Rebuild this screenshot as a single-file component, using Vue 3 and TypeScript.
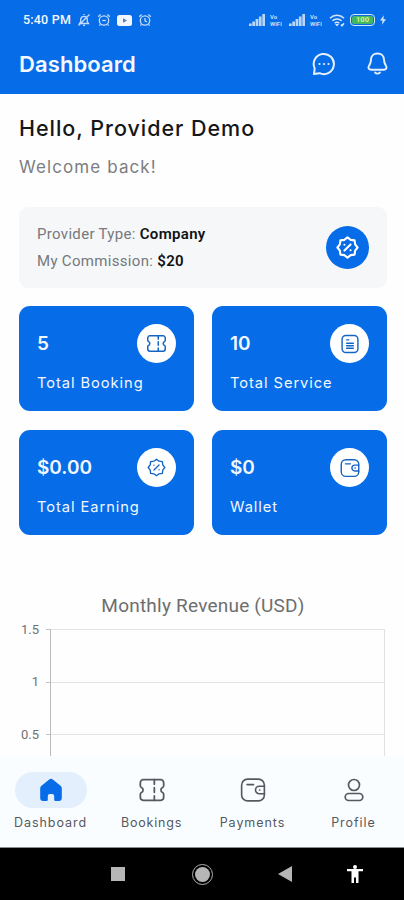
<script setup lang="ts">
interface Stat {
  value: string
  label: string
  icon: string
  cls: string
}

interface Tab {
  label: string
  icon: string
  active: boolean
  cls: string
}

const stats: Stat[] = [
  { value: '5', label: 'Total Booking', icon: 'ticket', cls: 'booking' },
  { value: '10', label: 'Total Service', icon: 'document', cls: 'service' },
  { value: '$0.00', label: 'Total Earning', icon: 'discount', cls: 'earning' },
  { value: '$0', label: 'Wallet', icon: 'wallet', cls: 'balance' },
]

const tabs: Tab[] = [
  { label: 'Dashboard', icon: 'home', active: true, cls: 't-dash' },
  { label: 'Bookings', icon: 'ticket', active: false, cls: 't-book' },
  { label: 'Payments', icon: 'wallet', active: false, cls: 't-pay' },
  { label: 'Profile', icon: 'profile', active: false, cls: 't-prof' },
]

const ticks: string[] = ['1.5', '1', '0.5']
const carriers: number[] = [1, 2]
</script>

<template>
  <div class="screen">
    <svg class="defs" width="0" height="0" aria-hidden="true">
      <symbol id="ticket" viewBox="0 0 24 24">
        <path d="M4.500 3.200h15A2.500 2.500 0 0 1 22 5.700v2.600a1.800 1.800 0 0 1-1 1.600a2.300 2.300 0 0 0 0 4.200a1.800 1.800 0 0 1 1 1.600v2.600a2.500 2.500 0 0 1-2.500 2.500h-15A2.500 2.500 0 0 1 2 18.300v-2.600a1.800 1.800 0 0 1 1-1.600a2.300 2.300 0 0 0 0-4.200a1.800 1.800 0 0 1-1-1.600V5.700a2.500 2.500 0 0 1 2.500-2.500z" />
        <path d="M14 3.200v3.800M14 10v4M14 17v3.800" />
      </symbol>
      <symbol id="document" viewBox="0 0 24 24">
        <rect x="2.500" y="1.800" width="19" height="20.400" rx="4.500" />
        <path d="M8 7h2.500M8 11h8M8 14h8M8 17h8" />
      </symbol>
      <symbol id="discount" viewBox="0 0 24 24">
        <path d="M12 1.500L15.300 4.050L19.400 4.600L19.950 8.700L22.500 12L19.950 15.300L19.400 19.400L15.300 19.950L12 22.500L8.700 19.950L4.600 19.400L4.050 15.300L1.500 12L4.050 8.700L4.600 4.600L8.700 4.050z" />
        <path d="M8.800 15.200l6.400-6.400M8.800 9.200h.010M15.200 14.800h.010" />
      </symbol>
      <symbol id="wallet" viewBox="0 0 24 24">
        <rect x="1.500" y="2" width="21" height="20" rx="5.500" />
        <path d="M22.500 8.500h-4.700a3.500 3.500 0 0 0 0 7h4.700M18 12h.300M6.500 7h6" />
      </symbol>
      <symbol id="home" viewBox="0 0 24 24">
        <path d="M10.200 1.500a2.900 2.900 0 0 1 3.600 0l8 6.500a2.800 2.800 0 0 1 1 2.200V20a3 3 0 0 1-3 3h-3.300a1.300 1.300 0 0 1-1.300-1.300V18a2 2 0 0 0-2-2h-2.400a2 2 0 0 0-2 2v3.700A1.300 1.300 0 0 1 7.500 23H4.200a3 3 0 0 1-3-3v-9.800a2.800 2.800 0 0 1 1-2.200z" />
      </symbol>
      <symbol id="profile" viewBox="0 0 24 24">
        <circle cx="12" cy="7" r="5.500" />
        <rect x="3.200" y="15.500" width="17.600" height="7" rx="3.500" />
      </symbol>
      <symbol id="clock" viewBox="0 0 14 14">
        <circle cx="7" cy="7.500" r="4.700" />
        <path d="M1.200 3.700L3.600 1.500M12.800 3.700L10.400 1.500M3.400 11.500l-1 1.200M10.600 11.500l1 1.200" />
      </symbol>
    </svg>

    <header class="top">
      <div class="status">
        <span class="time">5:40 PM</span>
        <svg class="st-icon" viewBox="0 0 14 14">
          <path d="M2.500 10.500h9l-1.200-2V6a3.400 3.400 0 0 0-6.600 0v2.500zM6 12.400h2M1.500 12.500L12.500 1.500M7 2V1" />
        </svg>
        <svg class="st-icon" viewBox="0 0 14 14"><use href="#clock" /><path d="M5.200 7.500h3.600" /></svg>
        <svg class="video" viewBox="0 0 15 11">
          <rect width="15" height="11" rx="2.500" fill="#f1f6ff" />
          <path d="M6 3.200v4.600l4-2.300z" fill="#4d7fb8" />
        </svg>
        <svg class="st-icon" viewBox="0 0 14 14"><use href="#clock" /><path d="M7 5v2.800l2 1" /></svg>
        <div class="right">
          <template v-for="n in carriers" :key="n">
            <svg class="bars" viewBox="0 0 16 12">
              <path d="M0 9.500h2.700V12H0zM3.300 7.500H6V12H3.300zM6.600 5h2.700v7H6.600zM9.900 2.500h2.700V12H9.900zM13.300 0H16v12h-2.700z" />
            </svg>
            <span class="vo"><span>Vo</span><span>WiFi</span></span>
          </template>
          <svg class="wifi" viewBox="0 0 16 13">
            <path d="M1 4.200a10 10 0 0 1 14 0M3.400 6.800a6.500 6.500 0 0 1 9.200 0M5.800 9.200a3 3 0 0 1 4.400 0" />
            <path class="solid" d="M6 10h4L8 12.500z" />
            <path d="M12 10.500l1 1.300 2-2.600" />
          </svg>
          <span class="battery"><span class="charge">100</span></span>
          <svg class="bolt" viewBox="0 0 7 11"><path d="M4.500 0L0 6h3L2.300 11 7 4.500H4z" /></svg>
        </div>
      </div>
      <div class="bar">
        <h1>Dashboard</h1>
        <svg class="chat" viewBox="0 0 24 24">
          <path d="M2 22l.700-5.600A10.100 10.100 0 1 1 7.600 21.200z" />
          <path d="M7.500 12h.010M12 12h.010M16.500 12h.010" class="dots" />
        </svg>
        <svg class="bell" viewBox="0 0 24 24">
          <path d="M12 1.500c-4 0-6.800 2.900-6.800 6.700 0 3.400-.700 4.300-2 6.100-1.500 2.200-.400 4.200 2.400 4.200h12.800c2.800 0 3.900-2 2.400-4.200-1.300-1.800-2-2.700-2-6.100 0-3.800-2.800-6.700-6.800-6.700z" />
          <path d="M9.500 21.400c1.300 1.500 3.700 1.500 5 0" />
        </svg>
      </div>
    </header>

    <main>
      <h2>Hello, Provider Demo</h2>
      <p class="welcome">Welcome back!</p>

      <section class="info">
        <div>
          <p>Provider Type: <b>Company</b></p>
          <p>My Commission: <b>$20</b></p>
        </div>
        <span class="disc"><svg class="icon"><use href="#discount" /></svg></span>
      </section>

      <section class="stats">
        <article v-for="s in stats" :key="s.label" :class="['stat', s.cls]">
          <div class="stat-top">
            <strong>{{ s.value }}</strong>
            <span class="disc"><svg class="icon"><use :href="'#' + s.icon" /></svg></span>
          </div>
          <span class="stat-label">{{ s.label }}</span>
        </article>
      </section>

      <h3>Monthly Revenue (USD)</h3>
      <section class="chart">
        <div class="axis"><span v-for="t in ticks" :key="t">{{ t }}</span></div>
        <div class="marks"><i v-for="t in ticks" :key="t"></i></div>
        <div class="plot"><i v-for="t in ticks" :key="t"></i></div>
      </section>
    </main>

    <nav class="tabs">
      <div v-for="t in tabs" :key="t.label" :class="['tab', t.cls, { active: t.active }]">
        <span class="pill"><svg class="icon"><use :href="'#' + t.icon" /></svg></span>
        <span class="tab-label">{{ t.label }}</span>
      </div>
    </nav>

    <footer class="system">
      <span class="square"></span>
      <span class="round"><i></i></span>
      <svg class="back" viewBox="0 0 14 16"><path d="M14 0v16L0 8z" /></svg>
      <svg class="access" viewBox="0 0 16 18">
        <circle cx="8" cy="2" r="2" />
        <path d="M0 4h16v2.200h-4.500V18H9v-5.500H7V18H4.500V6.200H0z" />
      </svg>
    </footer>
  </div>
</template>

<style>
body {
  margin: 0;
  background: #fff;
}
</style>

<style scoped>
.screen {
  width: 404px;
  height: 900px;
  overflow: hidden;
  display: flex;
  flex-direction: column;
  background: #fefefe;
  font-family: Inter, Roboto, sans-serif;
}
h1, h2, h3, p { margin: 0; }
svg { display: block; flex: none; }
.defs { position: absolute; }
.icon {
  fill: none;
  stroke: currentColor;
  stroke-width: 1.5;
  stroke-linecap: round;
  stroke-linejoin: round;
}
.top {
  height: 94px;
  flex: none;
  background: #066ce8;
  color: #f4f8ff;
}
.status {
  height: 40px;
  display: flex;
  align-items: center;
  padding: 0 17px 0 23px;
}
.time {
  width: 49px;
  font: 500 12.500px/16px Roboto, sans-serif;
  letter-spacing: 0.200px;
  white-space: nowrap;
  margin-right: 5px;
}
.st-icon {
  width: 14px;
  height: 14px;
  margin-right: 6px;
  fill: none;
  stroke: #c5dcfa;
  stroke-width: 1.300;
}
.video { width: 15px; height: 11px; margin-right: 6px; }
.right { display: flex; align-items: center; margin-left: auto; }
.bars { width: 16px; height: 12px; fill: #b9d5f8; margin-right: 5px; }
.vo {
  display: flex;
  flex-direction: column;
  width: 14px;
  margin-right: 5px;
  font: 700 6px/7px Roboto, sans-serif;
  color: #c5dcfa;
}
.wifi {
  width: 16px;
  height: 13px;
  fill: none;
  stroke: #d5e6fb;
  stroke-width: 1.500;
  margin-right: 5px;
}
.wifi .solid { fill: #d5e6fb; stroke: none; }
.battery {
  box-sizing: border-box;
  width: 25px;
  height: 12px;
  padding: 1px;
  border: 1px solid #d5e8f5;
  border-radius: 4px;
}
.charge {
  display: block;
  height: 8px;
  border-radius: 2px;
  background: #42b865;
  color: #d9f28a;
  text-align: center;
  font: 700 7.500px/8px Roboto, sans-serif;
}
.bolt { width: 6px; height: 10px; margin: 0 1px 0 5px; fill: #d5e6fb; }
.bar {
  height: 47px;
  display: flex;
  align-items: center;
  padding: 0 15px 0 19px;
}
h1 {
  margin-right: auto;
  font-size: 22px;
  line-height: 28px;
  font-weight: 600;
  letter-spacing: 0.100px;
}
.chat, .bell {
  fill: none;
  stroke: #e6f0ff;
  stroke-width: 2;
  stroke-linejoin: round;
  stroke-linecap: round;
}
.chat { width: 24px; height: 24px; margin-right: 30px; }
.bell { width: 23px; height: 23px; }
.chat .dots { stroke-width: 2.200; }

main {
  flex: 1;
  min-height: 0;
  overflow: hidden;
  padding: 0 17px 0 19px;
}
h2 {
  margin-top: 20px;
  font-size: 21.500px;
  line-height: 28px;
  font-weight: 500;
  letter-spacing: 0.970px;
  color: #161718;
  white-space: nowrap;
}
.welcome {
  margin-top: 14px;
  font-size: 17px;
  line-height: 22px;
  color: #7b7d80;
  letter-spacing: 1.100px;
}
.info {
  height: 81px;
  margin-top: 29px;
  box-sizing: border-box;
  display: flex;
  align-items: center;
  justify-content: space-between;
  padding: 0 18px;
  border-radius: 9px;
  background: #f5f7f9;
}
.info p {
  font: 400 15px/27px Roboto, sans-serif;
  letter-spacing: 0.320px;
  color: #77797c;
  white-space: nowrap;
}
.info b { font-weight: 600; color: #111214; }
.disc {
  display: grid;
  place-items: center;
  border-radius: 50%;
}
.info .disc { width: 43px; height: 43px; background: #066ce8; color: #fff; }
.info .icon { width: 23px; height: 23px; stroke-width: 2.200; }
.stats {
  display: grid;
  grid-template-columns: 175px 175px;
  grid-auto-rows: 105px;
  gap: 19px 18px;
  margin-top: 18px;
}
.stat {
  box-sizing: border-box;
  padding: 18px;
  border-radius: 11px;
  background: #066ce8;
  color: #f2f7ff;
}
.stat-top { display: flex; align-items: center; justify-content: space-between; }
.stat strong { font-size: 19px; line-height: 24px; font-weight: 600; }
.stat .disc { width: 39px; height: 39px; background: #fff; color: #1464c4; }
.stat .icon { width: 20px; height: 20px; stroke-width: 1.700; }
.stat.booking .icon { width: 21px; height: 21px; }
.stat.earning .icon { width: 19px; height: 19px; }
.stat-label {
  display: block;
  margin-top: 10px;
  font-size: 14.700px;
  line-height: 20px;
  letter-spacing: 0.930px;
  white-space: nowrap;
}
h3 {
  margin-top: 59px;
  font: 400 19px/24px Roboto, sans-serif;
  letter-spacing: 0.220px;
  color: #6d6e70;
  text-align: center;
  white-space: nowrap;
}
.chart { display: flex; margin-top: 11px; height: 140px; }
.axis {
  width: 20px;
  margin-right: 7px;
  display: flex;
  flex-direction: column;
  text-align: right;
  font: 400 13px/16px Roboto, sans-serif;
  color: #707173;
}
.axis span {
  flex: none;
  height: 52.500px;
  margin-top: -7.500px;
  margin-bottom: 7.500px;
}
.marks { width: 4px; }
.marks i, .plot i {
  display: block;
  box-sizing: border-box;
  height: 52.500px;
  border-top: 1px solid #e3e4e5;
}
.marks i { border-color: #c4c5c6; }
.plot {
  box-sizing: border-box;
  width: 335px;
  border-left: 1px solid #b9babb;
  border-right: 1px solid #e0e1e2;
}
.tabs {
  height: 92px;
  flex: none;
  box-sizing: border-box;
  display: grid;
  grid-template-columns: repeat(4, 101px);
  padding-top: 16px;
  background: #fafdff;
  border-bottom: 1px solid #8a8c8e;
}
.tab { display: flex; flex-direction: column; align-items: center; color: #55595e; }
.pill {
  display: grid;
  place-items: center;
  width: 72px;
  height: 36px;
  border-radius: 18px;
}
.active .pill { background: #e3effd; color: #066ce8; }
.tab .icon { width: 26px; height: 26px; stroke-width: 1.500; }
.tab.t-book .icon { width: 28px; height: 28px; }
.tab.active .icon { width: 24px; height: 24px; fill: currentColor; stroke: none; }
.tab.t-prof .icon { width: 24px; height: 24px; stroke-width: 1.700; }
.tab-label {
  margin-top: 7px;
  font-size: 12.500px;
  line-height: 16px;
  letter-spacing: 0.950px;
}
.t-book .tab-label { letter-spacing: 0.800px; }
.system {
  height: 52px;
  flex: none;
  display: flex;
  align-items: center;
  background: #000;
  padding-left: 111px;
}
.square { width: 14px; height: 14px; background: #b6b6b6; }
.round {
  box-sizing: border-box;
  width: 21px;
  height: 21px;
  margin-left: 67px;
  padding: 2px;
  border: 1.500px solid #b0b0b0;
  border-radius: 50%;
}
.round i { display: block; height: 100%; border-radius: 50%; background: #b6b6b6; }
.back { width: 14px; height: 16px; margin-left: 65px; fill: #b6b6b6; }
.access { width: 16px; height: 18px; margin-left: 55px; fill: #fff; }
</style>
